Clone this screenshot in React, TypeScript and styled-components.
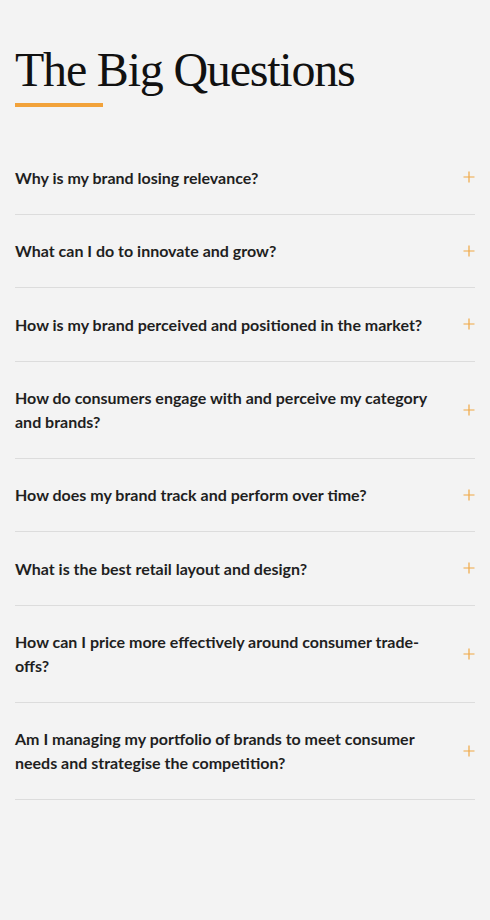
import React from "react";
import styled, { createGlobalStyle } from "styled-components";

const Global = createGlobalStyle`
  html, body { margin: 0; padding: 0; background: #f3f3f3; }
  * { box-sizing: border-box; }
`;

const Page = styled.div`
  background: #f3f3f3;
  min-height: 920px;
  padding: 40px 15px 0 15px;
`;

const Title = styled.h1`
  margin: 0;
  font-family: "Liberation Serif", "Times New Roman", serif;
  font-weight: 400;
  font-size: 48px;
  line-height: 60px;
  color: #111;
  letter-spacing: -1.2px;
`;

const Underline = styled.div`
  width: 88px;
  height: 4px;
  background: #f2a23a;
  margin-top: 3px;
`;

const List = styled.div`
  margin-top: 34px;
  display: flex;
  flex-direction: column;
`;

const Row = styled.div`
  display: grid;
  grid-template-columns: 1fr 12px;
  column-gap: 20px;
  align-items: center;
  padding: 24.5px 0;
  border-bottom: 1px solid #dcdcdc;
`;

const Question = styled.div`
  font-family: Lato, "Liberation Sans", sans-serif;
  font-weight: 700;
  font-size: 16px;
  line-height: 23.5px;
  color: #1f1f1f;
`;

const Plus = () => (
  <svg width="12" height="12" viewBox="0 0 12 12">
    <path d="M6 0.5V11.5M0.5 6H11.5" stroke="#f0a845" strokeWidth="1.2" fill="none" />
  </svg>
);

const questions = [
  "Why is my brand losing relevance?",
  "What can I do to innovate and grow?",
  "How is my brand perceived and positioned in the market?",
  "How do consumers engage with and perceive my category and brands?",
  "How does my brand track and perform over time?",
  "What is the best retail layout and design?",
  "How can I price more effectively around consumer trade-offs?",
  "Am I managing my portfolio of brands to meet consumer needs and strategise the competition?",
];

export default function App() {
  return (
    <>
      <Global />
      <Page>
        <Title>The Big Questions</Title>
        <Underline />
        <List>
          {questions.map((q) => (
            <Row key={q}>
              <Question>{q}</Question>
              <Plus />
            </Row>
          ))}
        </List>
      </Page>
    </>
  );
}
